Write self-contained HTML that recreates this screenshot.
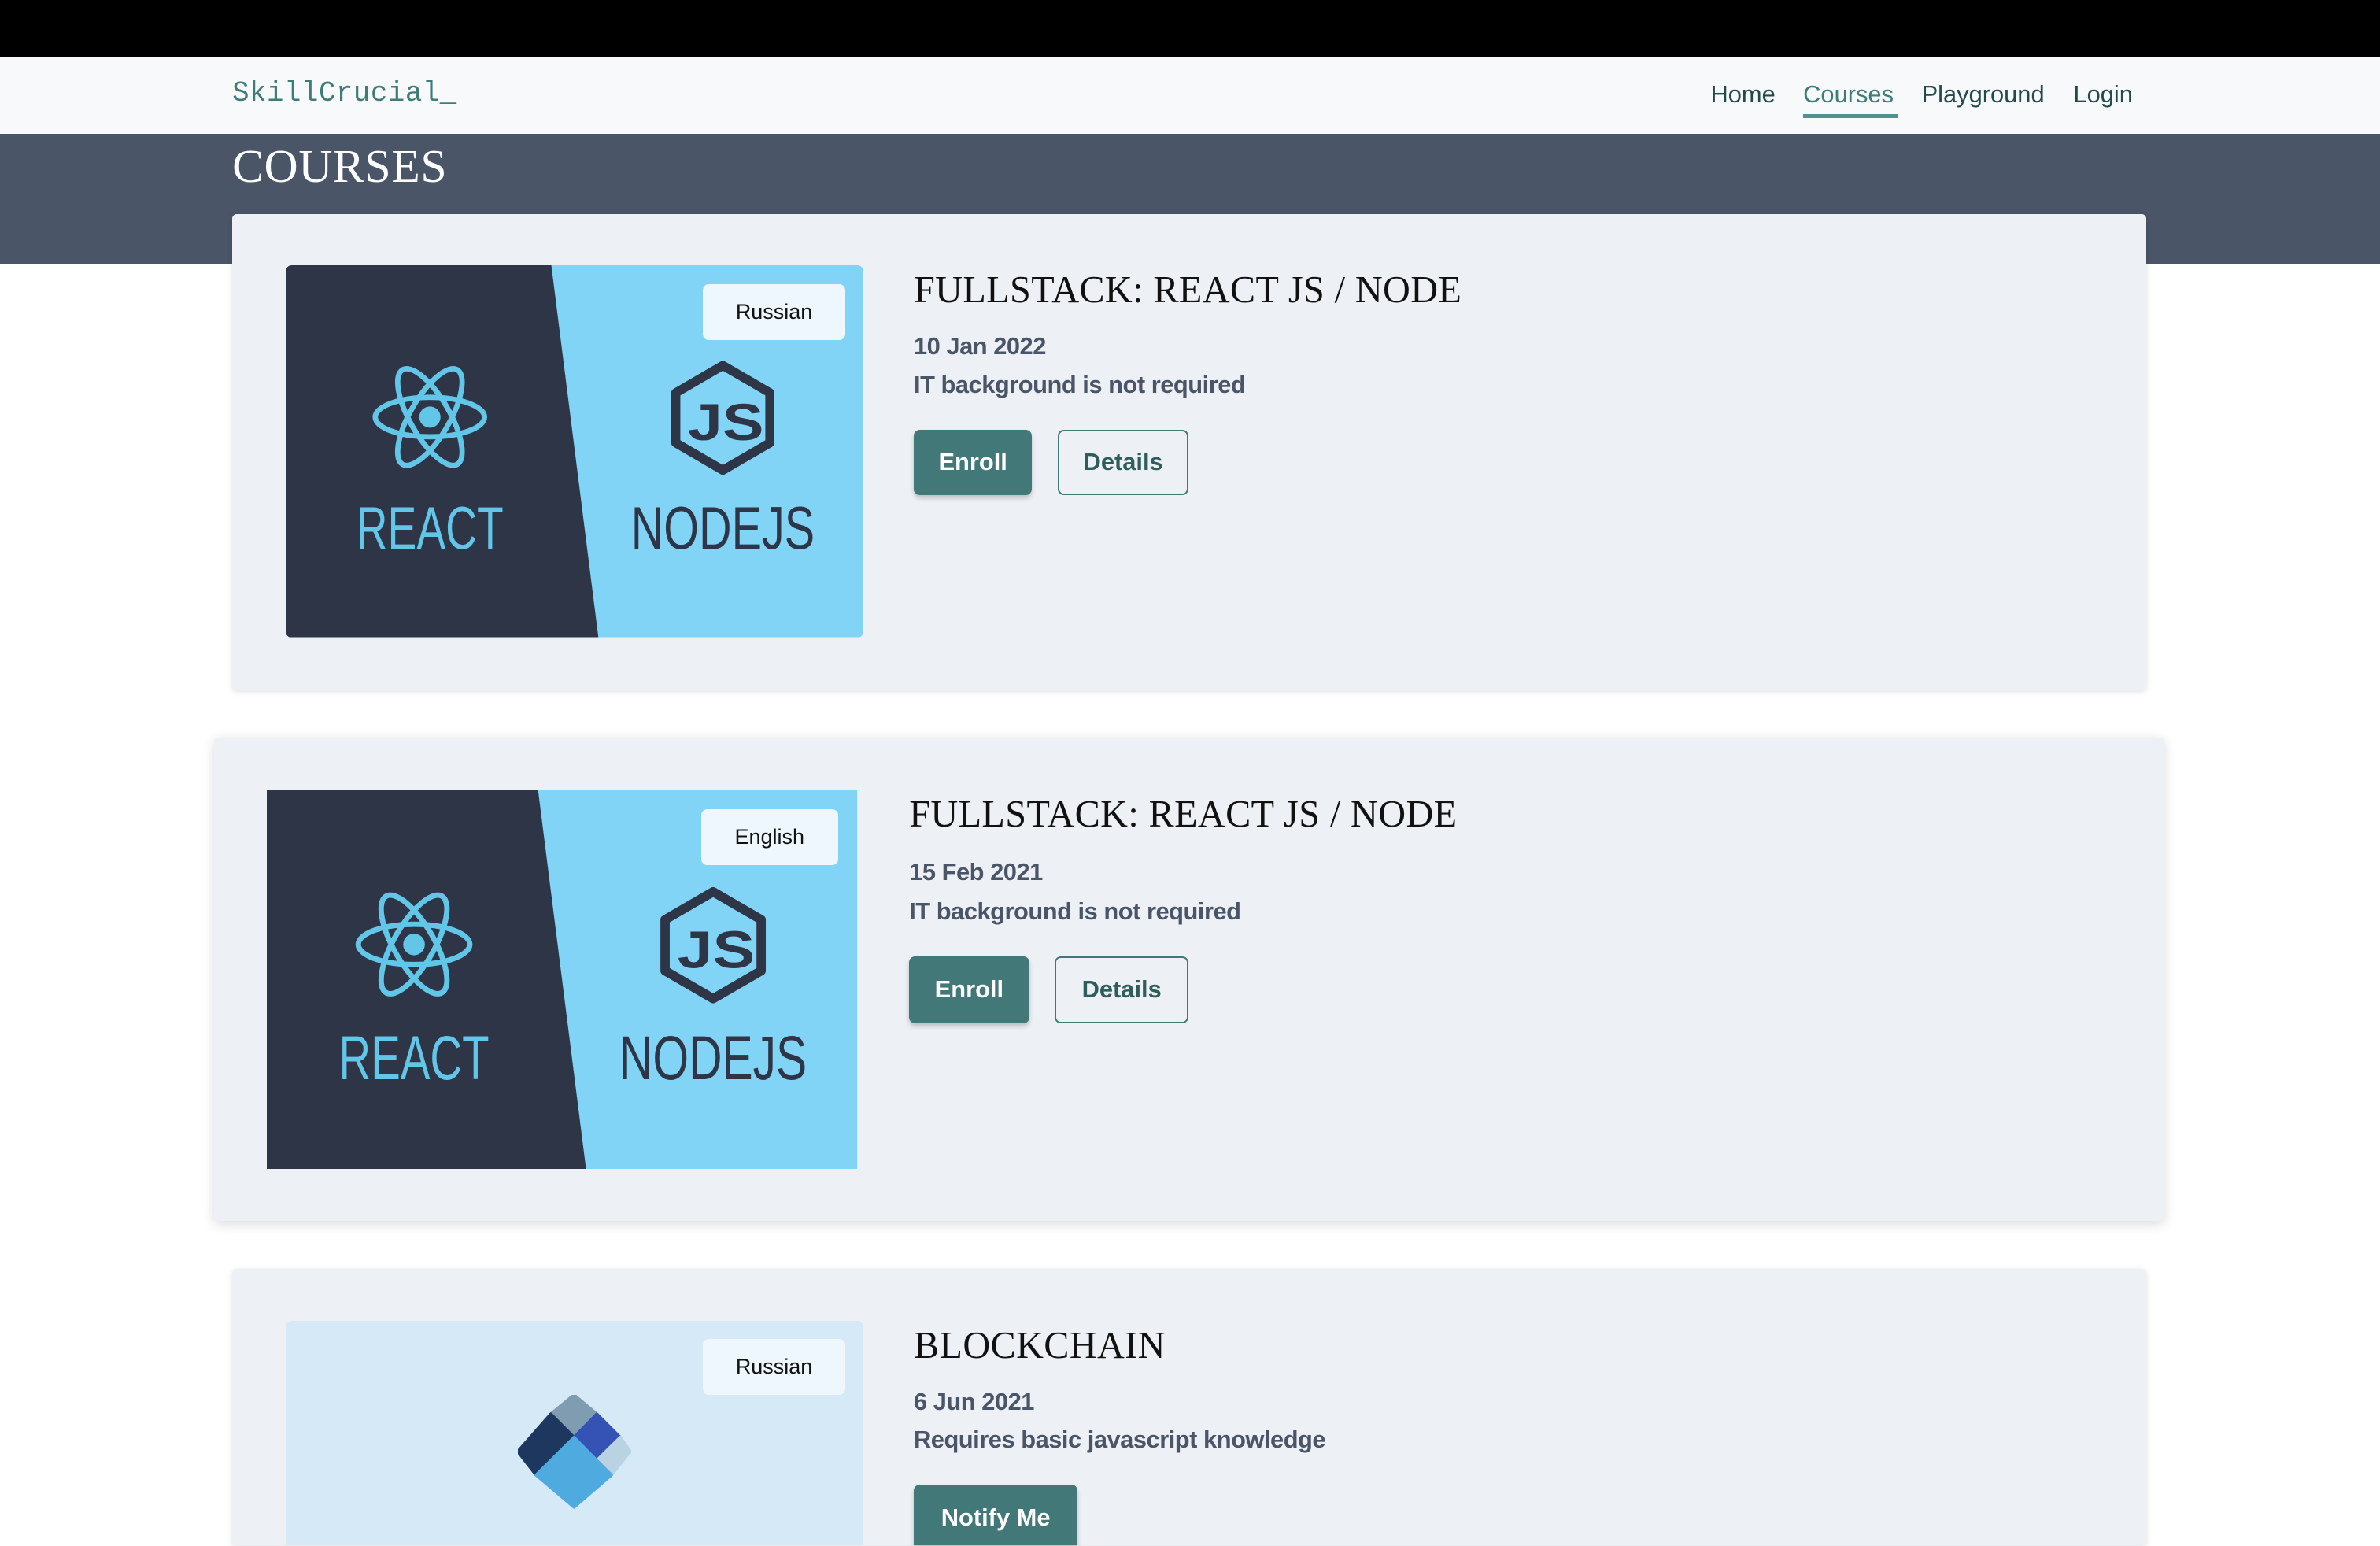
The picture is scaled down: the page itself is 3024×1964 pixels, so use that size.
<!DOCTYPE html>
<html><head><meta charset="utf-8"><style>
html{zoom:1.928571;overflow:hidden;height:1018px}
body{margin:0;width:1568px;height:1018px;overflow:hidden;background:#fff;font-family:"Liberation Sans",sans-serif;position:relative}
.abs{position:absolute}
.top{left:0;top:0;width:1568px;height:38px;background:#000}
.nav{left:0;top:38px;width:1568px;height:50px;background:#f7f9fb}
.logo{left:153px;top:51px;font-family:"Liberation Mono",monospace;font-size:18.5px;color:#3f7b78;letter-spacing:0.3px}
.nl{top:53px;font-size:16px;color:#234a4a}
.band{left:0;top:88px;width:1568px;height:86px;background:#4a5567}
.h1{left:153px;top:92px;font-family:"Liberation Serif",serif;font-size:31px;color:#fff;letter-spacing:0.3px}
.card{background:#edf1f5;border-radius:3px;box-shadow:0 1px 4px rgba(0,0,0,.12)}
.title{font-family:"Liberation Serif",serif;font-size:25px;color:#111;letter-spacing:0.2px;white-space:nowrap}
.date{font-size:16px;color:#4a5568;font-weight:bold;letter-spacing:-0.25px;white-space:nowrap}
.btn{border-radius:4px;font-size:16px;font-weight:bold;text-align:center;box-sizing:border-box}
.fill{background:#437878;color:#fff;box-shadow:0 2px 3px rgba(0,0,0,.2)}
.out{border:1.5px solid #437878;color:#2f5d5c}
.badge{background:#eef7fd;border-radius:4px;font-size:14px;color:#111;text-align:center}
</style></head><body>
<div class="abs top"></div>
<div class="abs nav"></div>
<div class="abs logo">SkillCrucial_</div>
<div class="abs nl" style="left:1127px">Home</div>
<div class="abs nl" style="left:1188px;color:#3f7b78">Courses</div>
<div class="abs" style="left:1188px;top:75px;width:62px;height:3px;background:#4f9390"></div>
<div class="abs nl" style="left:1266px">Playground</div>
<div class="abs nl" style="left:1366px">Login</div>
<div class="abs band"></div>
<div class="abs h1">COURSES</div>

<svg width="0" height="0" style="position:absolute"><defs>
<g id="rn">
<rect width="381" height="245" fill="#81d4f5"/>
<polygon points="0,0 175,0 206,245 0,245" fill="#2e3546"/>
<g transform="translate(95,100)" fill="none" stroke="#61c6e8" stroke-width="3.5">
<ellipse rx="36" ry="13"/><ellipse rx="36" ry="13" transform="rotate(60)"/><ellipse rx="36" ry="13" transform="rotate(-60)"/>
<circle r="7" fill="#61c6e8" stroke="none"/>
</g>
<text x="95" y="187" text-anchor="middle" font-family="Liberation Sans Narrow, Liberation Sans, sans-serif" font-size="40" fill="#61c6e8" textLength="97" lengthAdjust="spacingAndGlyphs">REACT</text>
<polygon points="288,66 319,84 319,117 288,135 257,117 257,84" fill="none" stroke="#2e3546" stroke-width="6" stroke-linejoin="round"/>
<text x="290" y="115" text-anchor="middle" font-family="Liberation Sans, sans-serif" font-weight="bold" font-size="34" fill="#2e3546" textLength="50" lengthAdjust="spacingAndGlyphs">JS</text>
<text x="288" y="187" text-anchor="middle" font-family="Liberation Sans Narrow, Liberation Sans, sans-serif" font-size="40" fill="#2e3546" textLength="121" lengthAdjust="spacingAndGlyphs">NODEJS</text>
</g></defs></svg>

<!-- card 1 -->
<div class="abs card" style="left:153px;top:141px;width:1261px;height:314px"></div>
<svg class="abs" style="left:188px;top:175px;border-radius:4px" width="381" height="245" viewBox="0 0 381 245"><use href="#rn"/></svg>
<div class="abs badge" style="left:463px;top:187px;width:94px;height:37px;line-height:37px">Russian</div>
<div class="abs title" style="left:602px;top:177px">FULLSTACK: REACT JS / NODE</div>
<div class="abs date" style="left:602px;top:219px">10 Jan 2022</div>
<div class="abs date" style="left:602px;top:244px">IT background is not required</div>
<div class="abs btn fill" style="left:602px;top:283px;width:78px;height:43px;line-height:43px">Enroll</div>
<div class="abs btn out" style="left:697px;top:283px;width:86px;height:43px;line-height:40px">Details</div>

<!-- card 2 -->
<div class="abs card" style="left:141px;top:486px;width:1285px;height:318px;box-shadow:0 2px 8px rgba(0,0,0,.15)"></div>
<svg class="abs" style="left:176px;top:520px" width="389" height="250" viewBox="0 0 381 245" preserveAspectRatio="none"><use href="#rn"/></svg>
<div class="abs badge" style="left:462px;top:533px;width:90px;height:37px;line-height:37px">English</div>
<div class="abs title" style="left:599px;top:522px">FULLSTACK: REACT JS / NODE</div>
<div class="abs date" style="left:599px;top:565px">15 Feb 2021</div>
<div class="abs date" style="left:599px;top:591px">IT background is not required</div>
<div class="abs btn fill" style="left:599px;top:630px;width:79px;height:44px;line-height:44px">Enroll</div>
<div class="abs btn out" style="left:695px;top:630px;width:88px;height:44px;line-height:41px">Details</div>

<!-- card 3 -->
<div class="abs card" style="left:153px;top:836px;width:1261px;height:182px;border-radius:3px 3px 0 0"></div>
<div class="abs" style="left:188px;top:870px;width:381px;height:148px;background:#d6e9f6;border-radius:4px 4px 0 0"></div>
<svg class="abs" style="left:341px;top:919px" width="75" height="75" viewBox="0 0 75 75">
<g stroke-linejoin="round" stroke-width="2">
<polygon points="37,0 52,12.6 37,28 21.7,12.6" fill="#809cb0" stroke="#809cb0"/>
<polygon points="21.7,12.6 37,28 12,52.8 0,37.3" fill="#1d375e" stroke="#1d375e"/>
<polygon points="52,12.6 67.4,28 52,43.2 37,28" fill="#3453b4" stroke="#3453b4"/>
<polygon points="67.4,28 74,37.3 61.6,52.8 52,43.2" fill="#b9d3e3" stroke="#b9d3e3"/>
<polygon points="37,28 52,43.2 61.6,52.8 37,74 12,52.8" fill="#4faae0" stroke="#4faae0"/>
</g>
</svg>
<div class="abs badge" style="left:463px;top:882px;width:94px;height:37px;line-height:37px">Russian</div>
<div class="abs title" style="left:602px;top:872px">BLOCKCHAIN</div>
<div class="abs date" style="left:602px;top:914px">6 Jun 2021</div>
<div class="abs date" style="left:602px;top:939px">Requires basic javascript knowledge</div>
<div class="abs btn fill" style="left:602px;top:978px;width:108px;height:40px;line-height:44px;border-radius:4px 4px 0 0">Notify Me</div>
</body></html>
